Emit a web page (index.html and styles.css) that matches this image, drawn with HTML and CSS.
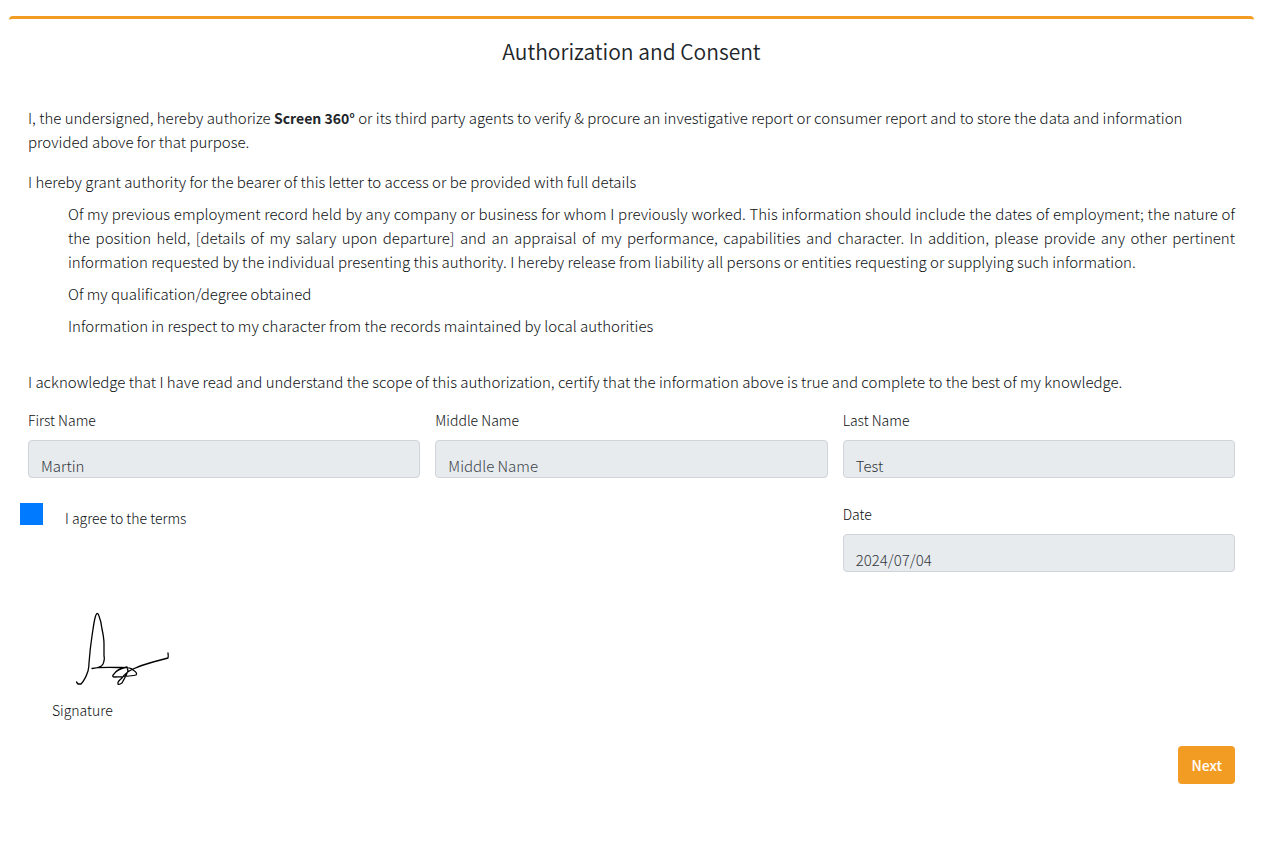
FILE: index.html
```html
<!DOCTYPE html>
<html lang="en">
<head>
<meta charset="utf-8">
<meta name="viewport" content="width=device-width, initial-scale=1">
<title>Authorization and Consent</title>
<link rel="stylesheet" href="styles.css">
</head>
<body>
<main class="card">
  <h1 class="card-title">Authorization and Consent</h1>
  <form class="consent">
    <p class="intro">I, the undersigned, hereby authorize <strong>Screen 360°</strong> or its third party agents to verify &amp; procure an investigative report or consumer report and to store the data and information provided above for that purpose.</p>
    <p class="grant">I hereby grant authority for the bearer of this letter to access or be provided with full details</p>
    <ul class="details">
      <li>Of my previous employment record held by any company or business for whom I previously worked. This information should include the dates of employment; the nature of the position held, [details of my salary upon departure] and an appraisal of my performance, capabilities and character. In addition, please provide any other pertinent information requested by the individual presenting this authority. I hereby release from liability all persons or entities requesting or supplying such information.</li>
      <li>Of my qualification/degree obtained</li>
      <li>Information in respect to my character from the records maintained by local authorities</li>
    </ul>
    <p class="acknowledge">I acknowledge that I have read and understand the scope of this authorization, certify that the information above is true and complete to the best of my knowledge.</p>
    <div class="fields">
      <div class="field">
        <label for="first-name">First Name</label>
        <input class="control" id="first-name" type="text" value="Martin" readonly>
      </div>
      <div class="field">
        <label for="middle-name">Middle Name</label>
        <input class="control" id="middle-name" type="text" placeholder="Middle Name" readonly>
      </div>
      <div class="field">
        <label for="last-name">Last Name</label>
        <input class="control" id="last-name" type="text" value="Test" readonly>
      </div>
      <div class="agree">
        <input class="agree-box" id="agree" type="checkbox" checked>
        <label for="agree">I agree to the terms</label>
      </div>
      <div class="field date-field">
        <label for="date">Date</label>
        <input class="control" id="date" type="text" value="2024/07/04" readonly>
      </div>
    </div>
    <figure class="signature">
      <svg class="signature-ink" viewBox="0 0 130 88" role="img" aria-label="Handwritten signature">
        <path d="M24.5 71 L26 73 L29 73 Q33 69 36 60 Q37 56 37 52 Q38 38 40 25 Q42 11 43 7 Q45 -1 47 5 Q49 10 50 18 Q52 27 52 33 L52 45 Q53 48 51 53 Q49 57 40 57.500 Q46 56 66 56.500 Q79 56 81 59 Q86 62 84 64 Q81 65 63 66 Q59 66 62 63 Q65 58 75 56 L76 60 Q73 67 70 72 Q67 74 66 73 Q65 71 70 67 Q74 61 81 58 Q90 54 101 51 L116 47 Q116.500 46 116 42"/>
      </svg>
      <figcaption>Signature</figcaption>
    </figure>
    <div class="actions">
      <button class="next" type="submit">Next</button>
    </div>
  </form>
</main>
</body>
</html>
```

FILE: styles.css
```css
* {
  box-sizing: border-box;
}

body {
  margin: 0;
  padding: 16px 9px;
  background: #fff;
  color: #0c0f12;
  font-family: "Noto Sans CJK SC", "Noto Sans", sans-serif;
  font-size: 15px;
  font-weight: 300;
  line-height: 24px;
}

.card {
  border-top: 3px solid #f39c23;
  border-radius: 4px;
  padding: 16px 19px 0;
}

.card-title {
  margin: 0 0 39px;
  color: #212529;
  font-size: 21px;
  font-weight: 350;
  line-height: 32px;
  text-align: center;
}

.intro,
.grant,
.acknowledge {
  margin: 0;
}

.intro {
  margin-bottom: 16px;
}

.intro strong {
  color: #212529;
  font-size: 14px;
  font-weight: 700;
}

.details {
  margin: 8px 0 32px;
  padding-left: 40px;
  list-style: none;
  text-align: justify;
}

.details li {
  margin-bottom: 8px;
}

.acknowledge {
  margin-bottom: 15px;
}

.fields {
  display: grid;
  grid-template-columns: repeat(3, 1fr);
  gap: 25px 15px;
}

.field {
  display: flex;
  flex-direction: column;
  gap: 9px;
}

.field label,
.agree label,
.signature figcaption {
  font-size: 14px;
  line-height: 22px;
}

.control {
  width: 100%;
  height: 38px;
  margin: 0;
  padding: 13px 12px 0;
  border: 1px solid #ced4da;
  border-radius: 4px;
  background: #e8ebee;
  color: #31373d;
  font: inherit;
  line-height: 22px;
}

.control::placeholder {
  color: #3c444b;
  opacity: 1;
}

.agree {
  display: flex;
  align-items: flex-start;
  gap: 22px;
  margin-left: -8px;
}

.agree-box {
  appearance: none;
  width: 23px;
  height: 22px;
  margin: 0;
  background: #007bff;
}

.agree label {
  padding-top: 4px;
}

.date-field {
  grid-column: 3;
}

.signature {
  margin: 39px 0 0 24px;
}

.signature-ink {
  display: block;
  width: 130px;
  height: 88px;
  fill: none;
  stroke: #000;
  stroke-width: 1.3;
  stroke-linecap: round;
  stroke-linejoin: round;
}

.actions {
  display: flex;
  justify-content: flex-end;
  margin-top: 25px;
}

.next {
  height: 38px;
  padding: 0 13px;
  border: 0;
  border-radius: 4px;
  background: #f39c23;
  color: #fff;
  font: inherit;
  font-size: 14px;
  font-weight: 500;
}
```
